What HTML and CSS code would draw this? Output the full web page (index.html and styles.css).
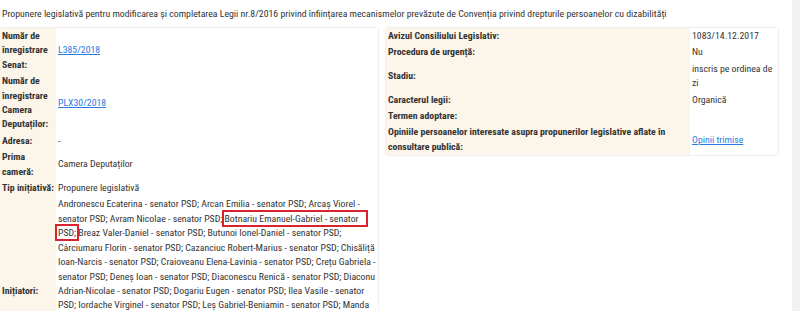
FILE: index.html
```html
<!DOCTYPE html>
<html lang="ro">
<head>
<meta charset="utf-8">
<link rel="stylesheet" href="styles.css">
</head>
<body>
<div class="page">
  <div class="content">
    <div class="title">Propunere legislativă pentru modificarea și completarea Legii nr.8/2016 privind înființarea mecanismelor prevăzute de Convenția privind drepturile persoanelor cu dizabilități</div>
    <div class="tables">
      <table class="info left">
        <tr><th>Număr de înregistrare Senat:</th><td><a href="#">L385/2018</a></td></tr>
        <tr><th>Număr de înregistrare Camera Deputaților:</th><td><a href="#">PLX30/2018</a></td></tr>
        <tr><th>Adresa:</th><td>-</td></tr>
        <tr><th>Prima cameră:</th><td>Camera Deputaților</td></tr>
        <tr><th class="nowrap">Tip inițiativă:</th><td>Propunere legislativă</td></tr>
        <tr><th>Inițiatori:</th><td>Andronescu Ecaterina - senator PSD; Arcan Emilia - senator PSD; Arcaș Viorel - senator PSD; Avram Nicolae - senator PSD; <span class="mark mark-a">Botnariu Emanuel-Gabriel - senator</span> <span class="mark">PSD;</span> Breaz Valer-Daniel - senator PSD; Butunoi Ionel-Daniel - senator PSD; Cârciumaru Florin - senator PSD; Cazanciuc Robert-Marius - senator PSD; Chisăliță Ioan-Narcis - senator PSD; Craioveanu Elena-Lavinia - senator PSD; Crețu Gabriela - senator PSD; Deneș Ioan - senator PSD; Diaconescu Renică - senator PSD; Diaconu Adrian-Nicolae - senator PSD; Dogariu Eugen - senator PSD; Ilea Vasile - senator PSD; Iordache Virginel - senator PSD; Leș Gabriel-Beniamin - senator PSD; Manda Claudiu-Cătălin - senator PSD; Mihai Ionela - senator PSD; Moga Nicolae - senator PSD; Mutu Gabriel - senator PSD; Nicoară Marius-Petre - senator PSD; Niculescu-Țâgârlaș Liviu-Florian - senator PSD; Oprea Gabriela - senator PSD; Pavel Marian - senator PSD; Pop Liviu-Marian - senator PSD; Popa Mihai - senator PSD; Sbîrnea Liviu - senator PSD</td></tr>
      </table>
      <table class="info right">
        <tr><th>Avizul Consiliului Legislativ:</th><td>1083/14.12.2017</td></tr>
        <tr><th>Procedura de urgență:</th><td>Nu</td></tr>
        <tr><th>Stadiu:</th><td>inscris pe ordinea de zi</td></tr>
        <tr><th>Caracterul legii:</th><td>Organică</td></tr>
        <tr><th>Termen adoptare:</th><td></td></tr>
        <tr><th>Opiniile persoanelor interesate asupra propunerilor legislative aflate în consultare publică:</th><td><a href="#">Opinii trimise</a></td></tr>
      </table>
    </div>
  </div>
  <div class="scrollbar"></div>
</div>
</body>
</html>
```
FILE: styles.css
```css
html, body {
  margin: 0;
  padding: 0;
  background: #fff;
}
body {
  font-family: "Roboto Condensed", "Liberation Sans Narrow", "DejaVu Sans Condensed", Roboto, sans-serif;
  font-stretch: condensed;
  font-size: 9.8px;
  line-height: 14.4px;
  color: #333;
}
.page {
  display: flex;
  height: 311px;
  overflow: hidden;
}
.content {
  flex: 1;
}
.scrollbar {
  width: 8px;
  background: #f1f1f1;
}
.title {
  padding: 7px 0 0 2px;
  height: 28px;
  box-sizing: border-box;
}
.tables {
  display: flex;
  align-items: flex-start;
  gap: 8px;
}
table.info {
  border-collapse: collapse;
  box-shadow: 0 0 2px rgba(0,0,0,0.18);
  background: #fff;
}
table.left { width: 378px; }
table.right { width: 392px; }
table.info th {
  background: #fcf5ea;
  font-weight: bold;
  text-align: left;
  vertical-align: middle;
  padding: 1px 2px;
}
table.left th { width: 52px; }
table.right th { width: 300px; }
table.info td {
  padding: 1px 2px;
  vertical-align: middle;
}
.nowrap { white-space: nowrap; }
a {
  color: #2a7ae2;
  text-decoration: underline;
}
.mark {
  outline: 2px solid #d9232d;
  outline-offset: 1px;
}
.mark-a {
  padding-right: 6px;
}
```
